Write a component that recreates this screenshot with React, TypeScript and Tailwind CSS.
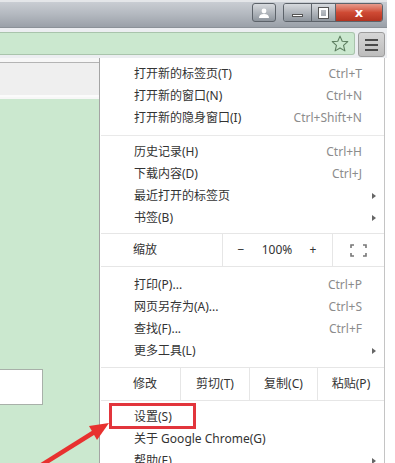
import React from 'react';

type Item = { label: string; shortcut?: string; sub?: boolean };

const group1: Item[] = [
  { label: '打开新的标签页(T)', shortcut: 'Ctrl+T' },
  { label: '打开新的窗口(N)', shortcut: 'Ctrl+N' },
  { label: '打开新的隐身窗口(I)', shortcut: 'Ctrl+Shift+N' },
];
const group2: Item[] = [
  { label: '历史记录(H)', shortcut: 'Ctrl+H' },
  { label: '下载内容(D)', shortcut: 'Ctrl+J' },
  { label: '最近打开的标签页', sub: true },
  { label: '书签(B)', sub: true },
];
const group3: Item[] = [
  { label: '打印(P)...', shortcut: 'Ctrl+P' },
  { label: '网页另存为(A)...', shortcut: 'Ctrl+S' },
  { label: '查找(F)...', shortcut: 'Ctrl+F' },
  { label: '更多工具(L)', sub: true },
];

const font = { fontFamily: '"Noto Sans", "Noto Sans CJK SC", sans-serif' };

function Row({ item }: { item: Item }) {
  return (
    <div className="flex items-center h-[22px] pl-[33px] text-[12px] text-[#333]">
      <span className="flex-1 whitespace-nowrap">{item.label}</span>
      {item.shortcut && <span className="text-[#8c8c8c] whitespace-nowrap">{item.shortcut}</span>}
      <span className="w-[22px] flex justify-center pl-[2px]">
        {item.sub && (
          <span className="w-0 h-0 border-y-[3.5px] border-y-transparent border-l-[4px] border-l-[#666]" />
        )}
      </span>
    </div>
  );
}

function Person() {
  return (
    <svg width="12" height="10" viewBox="0 0 12 10">
      <circle cx="6" cy="3" r="2.4" fill="#fff" />
      <path d="M1 10 Q1 6 6 6 Q11 6 11 10 Z" fill="#fff" />
    </svg>
  );
}

export default function App() {
  return (
    <div className="w-[395px] h-[463px] overflow-hidden bg-white flex relative" style={font}>
      <div className="w-[387px] flex flex-col h-full">
        {/* title bar */}
        <div className="h-[28px] shrink-0 border-t-2 border-[#e4e6e9] border-b border-b-[#8b9198] bg-gradient-to-b from-[#c9cdd3] via-[#b3b8bf] to-[#9aa0a8] flex items-start justify-end pr-[4px] pt-[1px]">
          <div className="w-[24px] h-[19px] rounded-[3px] border border-[#5d636a] bg-gradient-to-b from-[#d7dade] to-[#8e959d] flex items-center justify-center mr-[7px]">
            <Person />
          </div>
          <div className="flex h-[19px] rounded-[3px] border border-[#5d636a] overflow-hidden">
            <div className="w-[28px] bg-gradient-to-b from-[#d7dade] to-[#8e959d] flex items-center justify-center border-r border-[#5d636a]">
              <div className="w-[11px] h-[3px] bg-white border border-[#555] mt-[5px]" />
            </div>
            <div className="w-[24px] bg-gradient-to-b from-[#d7dade] to-[#8e959d] flex items-center justify-center border-r border-[#5d636a]">
              <div className="w-[9px] h-[10px] border-2 border-white outline outline-1 outline-[#555]" />
            </div>
            <div className="w-[46px] bg-gradient-to-b from-[#e69a8c] via-[#cf4a34] to-[#b3321f] flex items-center justify-center text-white font-bold text-[13px] leading-none" style={{ fontFamily: '"DejaVu Sans", sans-serif' }}>
              x
            </div>
          </div>
        </div>
        {/* toolbar */}
        <div className="h-[30px] shrink-0 bg-[#eceef1] flex items-start pt-[4px]">
          <div className="flex-1 h-[23px] bg-[#cbe8cf] border border-l-0 border-[#a9c4ac] rounded-r-[3px] flex items-center justify-end pr-[5px]">
            <svg width="18" height="17" viewBox="0 0 24 23">
              <path d="M12 1.5 L15 8.5 L22.5 9 L16.8 14 L18.6 21.5 L12 17.5 L5.4 21.5 L7.2 14 L1.5 9 L9 8.5 Z" fill="none" stroke="#5e7f61" strokeWidth="1.5" strokeLinejoin="round" />
            </svg>
          </div>
          <div className="w-[27px] h-[25px] ml-[3px] mr-[2px] rounded-[3px] border border-[#9c9c9c] bg-gradient-to-b from-[#d6d6d6] to-[#bdbdbd] flex flex-col items-center justify-center gap-[3px]">
            <div className="w-[13px] h-[2px] bg-[#4a4a4a]" />
            <div className="w-[13px] h-[2px] bg-[#4a4a4a]" />
            <div className="w-[13px] h-[2px] bg-[#4a4a4a]" />
          </div>
        </div>
        {/* body */}
        <div className="flex-1 flex min-h-0">
          <div className="w-[100px] shrink-0 flex flex-col border-r border-[#a4a4a4]">
            <div className="h-[41px] pt-[4px] bg-[#f7f7f7]">
              <div className="h-[35px] border-t border-[#b4b4b4] bg-[#efefef] border-b-2 border-b-[#fbfbfb]" />
            </div>
            <div className="flex-1 bg-[#cbe8cf] pt-[270px]">
              <div className="w-[43px] h-[36px] bg-white border border-l-0 border-[#a8b0a9]" />
            </div>
          </div>
          {/* menu */}
          <div className="w-[285px] shrink-0 bg-white border-r border-[#c4c4c4] pt-[5px] pl-[1px]">
            {group1.map((i) => <Row key={i.label} item={i} />)}
            <div className="h-[12px] flex items-center"><div className="h-px w-full bg-[#e9e9e9]" /></div>
            {group2.map((i) => <Row key={i.label} item={i} />)}
            <div className="mt-[4px] h-[34px] border-y border-[#e6e6e6] flex items-center text-[12px] text-[#333]">
              <span className="w-[122px] pl-[32px] h-full flex items-center border-r border-[#e6e6e6]">缩放</span>
              <span className="w-[36px] text-center">−</span>
              <span className="w-[36px] text-center">100%</span>
              <span className="w-[36px] text-center">+</span>
              <span className="flex-1 h-full flex items-center justify-center border-l border-[#e6e6e6] ml-[1px]">
                <svg width="17" height="13" viewBox="0 0 17 13">
                  <path d="M1 4 V1 H4 M13 1 H16 V4 M16 9 V12 H13 M4 12 H1 V9" fill="none" stroke="#777" strokeWidth="1.6" />
                </svg>
              </span>
            </div>
            <div className="h-[7px]" />
            {group3.map((i) => <Row key={i.label} item={i} />)}
            <div className="mt-[5px] h-[34px] border-y border-[#e6e6e6] flex items-center text-[12px] text-[#333]">
              <span className="w-[80px] pl-[32px] h-full flex items-center border-r border-[#e6e6e6]">修改</span>
              <span className="w-[69px] h-full flex items-center justify-center border-r border-[#e6e6e6]">剪切(T)</span>
              <span className="w-[68px] h-full flex items-center justify-center border-r border-[#e6e6e6]">复制(C)</span>
              <span className="flex-1 h-full flex items-center justify-center">粘贴(P)</span>
            </div>
            <div className="h-[5px]" />
            <div className="relative">
              <Row item={{ label: '设置(S)' }} />
              <div className="absolute left-[8px] top-[-3px] w-[87px] h-[26px] border-[3px] border-[#e2353c]" />
            </div>
            <Row item={{ label: '关于 Google Chrome(G)' }} />
            <Row item={{ label: '帮助(E)', sub: true }} />
          </div>
        </div>
      </div>
      {/* annotation arrow */}
      <svg className="absolute left-0 top-0 pointer-events-none" width="395" height="463">
        <line x1="40" y1="466" x2="96" y2="431" stroke="#e8312f" strokeWidth="4.5" />
        <polygon points="109,423 89,426 97,440" fill="#e8312f" />
      </svg>
    </div>
  );
}
